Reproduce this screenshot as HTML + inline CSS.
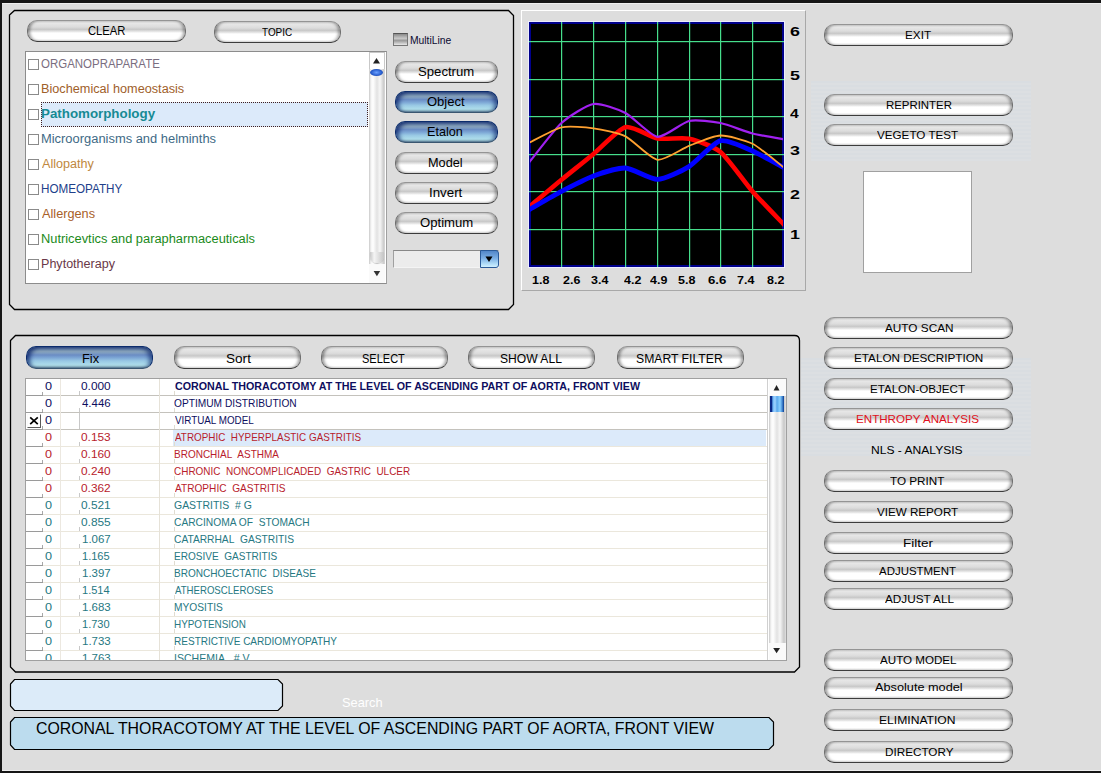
<!DOCTYPE html>
<html><head><meta charset="utf-8">
<style>
html,body{margin:0;padding:0}
body{width:1101px;height:773px;overflow:hidden;background:#dddddd;position:relative;font-family:"Liberation Sans",sans-serif}
.a{position:absolute}
.t{position:absolute;line-height:20px;white-space:nowrap;transform-origin:0 0}
.btn{position:absolute;box-sizing:border-box;height:22px;border-radius:10px;border:1px solid #707070;border-top-color:#949494;border-bottom-color:#3c3c3c;
 background:linear-gradient(#dedede 0%,#e6e6e6 12%,#dcdcdc 30%,#c8c8c8 42%,#e4e4e4 52%,#ffffff 60%,#ffffff 88%,#ececec 100%);
 box-shadow:inset 3px 0 3px -1px rgba(0,0,0,.38),inset -3px 0 3px -1px rgba(0,0,0,.32)}
.blue{border-color:#0c2c6c;border-bottom-color:#3a5670;
 background:linear-gradient(#8aa6c0 0%,#8eaac0 22%,#6a8cc4 38%,#7ea8d6 52%,#98c8e4 66%,#aadaea 82%,#a0ccd8 90%,#5a7a90 100%);
 box-shadow:inset 4px 2px 4px -1px rgba(5,30,100,.75),inset -4px 2px 4px -1px rgba(5,30,100,.6)}
.cb{position:absolute;left:28px;width:11px;height:11px;box-sizing:border-box;border:1px solid #8a8a8a;background:#fff}
</style></head><body>
<div class="a" style="left:0;top:0;width:1101px;height:3px;background:#161616"></div>
<div class="a" style="left:0;top:3px;width:1101px;height:1px;background:#eeeeee"></div>
<div class="a" style="left:0;top:771px;width:1101px;height:2px;background:#161616"></div>
<div class="a" style="left:0;top:770px;width:1101px;height:1px;background:#eeeeee"></div>
<div class="a" style="left:0;top:0;width:2px;height:773px;background:#161616"></div>
<svg class="a" style="left:0;top:0" width="1101" height="773">
 <path d="M9.5 15 L14.5 10.5 L508.5 10.5 L513.5 15.5 L513.5 304.5 L508.5 309.5 L14.5 309.5 L9.5 304.5 Z" fill="none" stroke="#000" stroke-width="1.3"/>
 <path d="M10.5 340.5 L15.5 335.5 L794.5 335.5 Q799.5 335.5 799.5 340.5 L799.5 667 L794.5 672 L15.5 672 L10.5 667 Z" fill="none" stroke="#000" stroke-width="1.3"/>
</svg>
<div class="btn" style="left:27px;top:20px;width:159px"></div>
<div class="t" id="t0" style="left:87.96px;top:20.90px;font-size:12.4px;color:#000;transform:scaleX(0.9065)">CLEAR</div>
<div class="btn" style="left:214px;top:21px;width:127px"></div>
<div class="t" id="t1" style="left:262.40px;top:21.90px;font-size:10.7px;color:#000;transform:scaleX(0.9295)">TOPIC</div>
<div class="a" style="left:393px;top:33px;width:15px;height:13px;box-sizing:border-box;border:1px solid #777;border-top-color:#555;background:linear-gradient(#8a8a8a,#c8c8c8 40%,#9a9a9a 60%,#e8e8e8)"></div>
<div class="t" id="t2" style="left:410.16px;top:29.75px;font-size:10.8px;color:#0a0a30;transform:scaleX(0.9545)">MultiLine</div>
<div class="a" style="left:25px;top:51px;width:362px;height:233px;box-sizing:border-box;border:1px solid #8c8c8c;border-right-color:#a0a0a0;background:#fff"></div>
<div class="a" style="left:369px;top:52px;width:16px;height:231px;background:linear-gradient(90deg,#c8c8c8 0,#f4f4f4 2px,#fff 4px,#e2e2e2 8px,#f6f6f6 11px,#c8c8c8 15px,#e0e0e0 16px)"></div>
<div class="a" style="left:369px;top:52px;width:16px;height:17px;background:#fff;border:1px solid #c8c8c8;border-bottom:0;box-sizing:border-box"></div>
<svg class="a" style="left:369px;top:53px" width="16" height="16"><path d="M4 10.5 L7.5 5 L11 10.5 Z" fill="#222"/></svg>
<div class="a" style="left:370px;top:69px;width:13px;height:7px;border-radius:50%;background:radial-gradient(ellipse at center,#6aa0ff 0%,#2a60d0 55%,#12308a 100%)"></div>
<div class="a" style="left:369px;top:264px;width:16px;height:19px;background:#fafafa"></div>
<div class="a" style="left:370px;top:252px;width:14px;height:11px;border-radius:0 0 7px 7px;background:linear-gradient(90deg,#c8c8c8,#f4f4f4 30%,#e0e0e0 60%,#c4c4c4);box-shadow:0 1px 1px rgba(0,0,0,.15)"></div>
<svg class="a" style="left:369px;top:264px" width="16" height="16"><path d="M4.6 7 L11.2 7 L7.9 12.3 Z" fill="#333"/></svg>
<div class="a" style="left:41px;top:102px;width:327px;height:25px;box-sizing:border-box;border:1px dotted #402020;background:#dceafa"></div>
<div class="cb" style="top:59px"></div>
<div class="t" id="t3" style="left:41.19px;top:54.00px;font-size:12px;color:#7a6e80;transform:scaleX(0.9564)">ORGANOPRAPARATE</div>
<div class="cb" style="top:84px"></div>
<div class="t" id="t4" style="left:41.18px;top:79.00px;font-size:12px;color:#a0602a;transform:scaleX(1.0578)">Biochemical homeostasis</div>
<div class="cb" style="top:109px"></div>
<div class="t" id="t5" style="left:41.19px;top:104.00px;font-size:12px;font-weight:bold;color:#168a94;transform:scaleX(1.1109)">Pathomorphology</div>
<div class="cb" style="top:134px"></div>
<div class="t" id="t6" style="left:41.19px;top:129.00px;font-size:12px;color:#3e6a86;transform:scaleX(1.0755)">Microorganisms and helminths</div>
<div class="cb" style="top:159px"></div>
<div class="t" id="t7" style="left:42.20px;top:154.00px;font-size:12px;color:#c08840;transform:scaleX(1.0494)">Allopathy</div>
<div class="cb" style="top:184px"></div>
<div class="t" id="t8" style="left:41.18px;top:179.00px;font-size:12px;color:#20408a;transform:scaleX(0.9722)">HOMEOPATHY</div>
<div class="cb" style="top:209px"></div>
<div class="t" id="t9" style="left:42.21px;top:204.00px;font-size:12px;color:#a86028;transform:scaleX(1.0596)">Allergens</div>
<div class="cb" style="top:234px"></div>
<div class="t" id="t10" style="left:41.19px;top:229.00px;font-size:12px;color:#1a8a1a;transform:scaleX(1.0696)">Nutricevtics and parapharmaceuticals</div>
<div class="cb" style="top:259px"></div>
<div class="t" id="t11" style="left:41.18px;top:254.00px;font-size:12px;color:#6a3848;transform:scaleX(1.0467)">Phytotherapy</div>
<div class="btn" style="left:395px;top:61px;width:103px"></div>
<div class="t" id="t12" style="left:417.58px;top:62.00px;font-size:12.2px;color:#000;transform:scaleX(1.0784)">Spectrum</div>
<div class="btn blue" style="left:395px;top:91px;width:103px"></div>
<div class="t" id="t13" style="left:426.58px;top:92.00px;font-size:12.2px;color:#000;transform:scaleX(1.0680)">Object</div>
<div class="btn blue" style="left:395px;top:121px;width:103px"></div>
<div class="t" id="t14" style="left:426.76px;top:122.00px;font-size:12.2px;color:#000;transform:scaleX(1.0373)">Etalon</div>
<div class="btn" style="left:395px;top:152px;width:103px"></div>
<div class="t" id="t15" style="left:428.36px;top:152.90px;font-size:12.2px;color:#000;transform:scaleX(1.0421)">Model</div>
<div class="btn" style="left:395px;top:182px;width:103px"></div>
<div class="t" id="t16" style="left:429.09px;top:183.00px;font-size:12.2px;color:#000;transform:scaleX(1.0912)">Invert</div>
<div class="btn" style="left:395px;top:212px;width:103px"></div>
<div class="t" id="t17" style="left:419.94px;top:212.70px;font-size:12.2px;color:#000;transform:scaleX(1.0771)">Optimum</div>
<div class="a" style="left:393px;top:250px;width:106px;height:18px;box-sizing:border-box;border:1px solid #f4f4f4;border-top-color:#888;border-left-color:#a0a0a0;background:#ececec"></div>
<div class="a" style="left:480px;top:250px;width:19px;height:18px;box-sizing:border-box;border:1px solid #2a5a98;border-radius:0 3px 3px 0;background:linear-gradient(#5286c8,#7aaee4 45%,#b0dcf8 80%,#d0f0ff)"></div>
<svg class="a" style="left:480px;top:250px" width="19" height="18"><path d="M5.5 6.5 L12.5 6.5 L9 12 Z" fill="#000"/></svg>
<div class="a" style="left:521px;top:10px;width:285px;height:281px;box-sizing:border-box;border:1px solid #fff;border-right-color:#a8a8a8;border-bottom-color:#a8a8a8"></div>
<svg class="a" style="left:0;top:0" width="1101" height="300">
<defs><clipPath id="pc"><rect x="530" y="23" width="253" height="243"/></clipPath></defs>
<rect x="529" y="22" width="255" height="245" fill="#000"/>
<rect x="528.5" y="21.5" width="256" height="246" fill="none" stroke="#ececff" stroke-width="1"/>
<rect x="530" y="23" width="253" height="243" fill="none" stroke="#00008c" stroke-width="2"/>
<g fill="#46de8c"><rect x="561" y="22" width="1.2" height="245"/><rect x="593" y="22" width="1.2" height="245"/><rect x="625" y="22" width="1.2" height="245"/><rect x="657" y="22" width="1.2" height="245"/><rect x="689" y="22" width="1.2" height="245"/><rect x="720" y="22" width="1.2" height="245"/><rect x="752" y="22" width="1.2" height="245"/><rect x="529" y="41" width="255" height="1.2"/><rect x="529" y="79" width="255" height="1.2"/><rect x="529" y="116" width="255" height="1.2"/><rect x="529" y="154" width="255" height="1.2"/><rect x="529" y="191" width="255" height="1.2"/><rect x="529" y="229" width="255" height="1.2"/></g>
<g clip-path="url(#pc)" fill="none" stroke-linejoin="round" stroke-linecap="round">
<path d="M529.0 207.0 C532.6 204.0 554.4 185.5 561.5 179.7 C568.6 173.9 586.5 159.7 593.5 153.9 C600.5 148.1 618.5 128.9 625.5 127.2 C632.5 125.5 650.5 137.2 657.5 138.5 C664.5 139.8 682.1 137.2 689.0 138.7 C695.9 140.2 713.5 146.2 720.5 152.0 C727.5 157.8 745.5 183.4 752.5 191.4 C759.5 199.4 780.5 220.9 784.0 224.6" stroke="#ff0000" stroke-width="4.6"/>
<path d="M529.0 209.7 C532.6 207.7 554.4 195.1 561.5 191.4 C568.6 187.7 586.5 178.6 593.5 176.0 C600.5 173.4 618.5 167.6 625.5 168.0 C632.5 168.4 650.5 179.6 657.5 179.4 C664.5 179.2 682.1 170.9 689.0 166.6 C695.9 162.3 713.5 142.4 720.5 140.7 C727.5 139.0 745.5 148.0 752.5 151.0 C759.5 154.0 780.5 165.8 784.0 167.6" stroke="#0000ff" stroke-width="4.8"/>
<path d="M529.0 162.5 C532.6 158.2 554.4 129.4 561.5 123.0 C568.6 116.6 586.5 105.1 593.5 104.0 C600.5 102.9 618.5 109.4 625.5 113.0 C632.5 116.6 650.5 135.9 657.5 136.8 C664.5 137.7 682.1 122.5 689.0 121.0 C695.9 119.5 713.5 121.6 720.5 123.0 C727.5 124.4 745.5 131.7 752.5 133.5 C759.5 135.3 780.5 138.7 784.0 139.3" stroke="#a020f0" stroke-width="2.2"/>
<path d="M529.0 142.8 C532.6 141.1 554.4 128.9 561.5 127.3 C568.6 125.7 586.5 127.3 593.5 128.3 C600.5 129.3 618.5 132.9 625.5 136.4 C632.5 139.9 650.5 158.8 657.5 159.8 C664.5 160.8 682.1 148.6 689.0 145.9 C695.9 143.2 713.5 135.7 720.5 135.5 C727.5 135.3 745.5 140.3 752.5 143.8 C759.5 147.3 780.5 165.0 784.0 167.6" stroke="#ffa030" stroke-width="1.8"/>
</g></svg>
<div class="t" id="t18" style="left:789.63px;top:21.80px;font-size:12.4px;font-weight:bold;color:#000;transform:scaleX(1.4417)">6</div>
<div class="t" id="t19" style="left:789.63px;top:65.70px;font-size:12.4px;font-weight:bold;color:#000;transform:scaleX(1.4417)">5</div>
<div class="t" id="t20" style="left:789.81px;top:104.40px;font-size:12.4px;font-weight:bold;color:#000;transform:scaleX(1.2615)">4</div>
<div class="t" id="t21" style="left:789.63px;top:141.30px;font-size:12.4px;font-weight:bold;color:#000;transform:scaleX(1.4417)">3</div>
<div class="t" id="t22" style="left:789.63px;top:185.40px;font-size:12.4px;font-weight:bold;color:#000;transform:scaleX(1.4417)">2</div>
<div class="t" id="t23" style="left:789.63px;top:225.10px;font-size:12.4px;font-weight:bold;color:#000;transform:scaleX(1.4417)">1</div>
<div class="t" id="t24" style="left:532.30px;top:269.90px;font-size:10.6px;font-weight:bold;color:#000;transform:scaleX(1.1807)">1.8</div>
<div class="t" id="t25" style="left:563.00px;top:269.90px;font-size:10.6px;font-weight:bold;color:#000;transform:scaleX(1.1761)">2.6</div>
<div class="t" id="t26" style="left:590.95px;top:269.90px;font-size:10.6px;font-weight:bold;color:#000;transform:scaleX(1.1761)">3.4</div>
<div class="t" id="t27" style="left:623.59px;top:269.90px;font-size:10.6px;font-weight:bold;color:#000;transform:scaleX(1.1761)">4.2</div>
<div class="t" id="t28" style="left:649.78px;top:269.90px;font-size:10.6px;font-weight:bold;color:#000;transform:scaleX(1.1761)">4.9</div>
<div class="t" id="t29" style="left:678.19px;top:269.90px;font-size:10.6px;font-weight:bold;color:#000;transform:scaleX(1.1807)">5.8</div>
<div class="t" id="t30" style="left:707.92px;top:269.90px;font-size:10.6px;font-weight:bold;color:#000;transform:scaleX(1.2496)">6.6</div>
<div class="t" id="t31" style="left:737.15px;top:269.90px;font-size:10.6px;font-weight:bold;color:#000;transform:scaleX(1.1761)">7.4</div>
<div class="t" id="t32" style="left:766.78px;top:269.90px;font-size:10.6px;font-weight:bold;color:#000;transform:scaleX(1.1761)">8.2</div>
<div class="a" style="left:811px;top:81px;width:220px;height:80px;background:repeating-linear-gradient(#d9dde1 0,#d9dde1 2px,#dcdfe2 2px,#dcdfe2 4px)"></div>
<div class="a" style="left:801px;top:358px;width:230px;height:98px;background:repeating-linear-gradient(#d9dde1 0,#d9dde1 2px,#dcdfe2 2px,#dcdfe2 4px)"></div>
<div class="a" style="left:863px;top:171px;width:109px;height:102px;box-sizing:border-box;border:1px solid #a0a0a0;background:#fff"></div>
<div class="btn" style="left:824px;top:24px;width:189px"></div>
<div class="t" id="t33" style="left:904.72px;top:24.80px;font-size:11.8px;color:#000;transform:scaleX(0.9953)">EXIT</div>
<div class="btn" style="left:824px;top:94px;width:189px"></div>
<div class="t" id="t34" style="left:885.97px;top:94.60px;font-size:11.8px;color:#000;transform:scaleX(0.9671)">REPRINTER</div>
<div class="btn" style="left:824px;top:124px;width:189px"></div>
<div class="t" id="t35" style="left:877.00px;top:125.00px;font-size:11.8px;color:#000;transform:scaleX(0.9883)">VEGETO TEST</div>
<div class="btn" style="left:824px;top:317px;width:189px"></div>
<div class="t" id="t36" style="left:885.20px;top:317.80px;font-size:11.8px;color:#000;transform:scaleX(0.9988)">AUTO SCAN</div>
<div class="btn" style="left:824px;top:347px;width:189px"></div>
<div class="t" id="t37" style="left:853.79px;top:348.10px;font-size:11.8px;color:#000;transform:scaleX(0.9932)">ETALON DESCRIPTION</div>
<div class="btn" style="left:824px;top:378px;width:189px"></div>
<div class="t" id="t38" style="left:870.39px;top:378.50px;font-size:11.8px;color:#000;transform:scaleX(0.9817)">ETALON-OBJECT</div>
<div class="btn" style="left:824px;top:408px;width:189px"></div>
<div class="t" id="t39" style="left:856.37px;top:408.60px;font-size:11.8px;color:#e01020;transform:scaleX(0.9847)">ENTHROPY ANALYSIS</div>
<div class="btn" style="left:824px;top:470px;width:189px"></div>
<div class="t" id="t40" style="left:890.40px;top:470.90px;font-size:11.8px;color:#000;transform:scaleX(0.9922)">TO PRINT</div>
<div class="btn" style="left:824px;top:501px;width:189px"></div>
<div class="t" id="t41" style="left:877.40px;top:501.90px;font-size:11.8px;color:#000;transform:scaleX(0.9859)">VIEW REPORT</div>
<div class="btn" style="left:824px;top:531.5px;width:189px"></div>
<div class="t" id="t42" style="left:902.74px;top:532.80px;font-size:11.8px;color:#000;transform:scaleX(1.1448)">Filter</div>
<div class="btn" style="left:824px;top:560px;width:189px"></div>
<div class="t" id="t43" style="left:879.00px;top:560.90px;font-size:11.8px;color:#000;transform:scaleX(0.9710)">ADJUSTMENT</div>
<div class="btn" style="left:824px;top:588px;width:189px"></div>
<div class="t" id="t44" style="left:884.61px;top:588.70px;font-size:11.8px;color:#000;transform:scaleX(0.9951)">ADJUST ALL</div>
<div class="btn" style="left:824px;top:649px;width:189px"></div>
<div class="t" id="t45" style="left:880.20px;top:649.50px;font-size:11.8px;color:#000;transform:scaleX(0.9844)">AUTO MODEL</div>
<div class="btn" style="left:824px;top:677px;width:189px"></div>
<div class="t" id="t46" style="left:874.60px;top:677.30px;font-size:11.8px;color:#000;transform:scaleX(1.0781)">Absolute model</div>
<div class="btn" style="left:824px;top:708.5px;width:189px"></div>
<div class="t" id="t47" style="left:879.38px;top:709.60px;font-size:11.8px;color:#000;transform:scaleX(1.0274)">ELIMINATION</div>
<div class="btn" style="left:824px;top:740.5px;width:189px"></div>
<div class="t" id="t48" style="left:884.57px;top:741.70px;font-size:11.8px;color:#000;transform:scaleX(0.9924)">DIRECTORY</div>
<div class="t" id="t49" style="left:871.37px;top:439.70px;font-size:11.5px;color:#000;transform:scaleX(1.0492)">NLS - ANALYSIS</div>
<div class="btn blue" style="left:26px;top:346px;width:127px;height:23px"></div>
<div class="t" id="t50" style="left:81.93px;top:348.80px;font-size:12.3px;color:#000;transform:scaleX(1.0390)">Fix</div>
<div class="btn" style="left:174px;top:346px;width:127px;height:23px"></div>
<div class="t" id="t51" style="left:225.89px;top:348.80px;font-size:12.3px;color:#000;transform:scaleX(1.1041)">Sort</div>
<div class="btn" style="left:321px;top:346px;width:127px;height:23px"></div>
<div class="t" id="t52" style="left:361.56px;top:348.80px;font-size:12.3px;color:#000;transform:scaleX(0.8953)">SELECT</div>
<div class="btn" style="left:468px;top:346px;width:127px;height:23px"></div>
<div class="t" id="t53" style="left:500.18px;top:348.80px;font-size:12.3px;color:#000;transform:scaleX(0.9841)">SHOW ALL</div>
<div class="btn" style="left:617px;top:346px;width:127px;height:23px"></div>
<div class="t" id="t54" style="left:636.37px;top:348.80px;font-size:12.3px;color:#000;transform:scaleX(0.9914)">SMART FILTER</div>
<div class="a" style="left:25px;top:378px;width:762px;height:283px;box-sizing:border-box;border:1px solid #a0a0a0;background:#fff;overflow:hidden">
<div class="a" style="left:0;top:16px;width:741px;height:1px;background:#c4c2bc"></div>
<div class="a" style="left:0;top:16px;width:17px;height:1px;background:#9a9a9a"></div>
<div class="a" style="left:16px;top:13px;width:1px;height:3px;background:#a8a8a8"></div>
<div class="a" style="left:53px;top:12px;width:1px;height:4px;background:#c8c8c8"></div>
<div class="a" style="left:148px;top:12px;width:1px;height:4px;background:#e0dcd0"></div>
<div class="t" id="t55" style="left:18.77px;top:-2.20px;font-size:10.4px;color:#0e0e5e;transform:scaleX(1.2186)">0</div>
<div class="t" id="t56" style="left:55.28px;top:-2.20px;font-size:10.4px;color:#0e0e5e;transform:scaleX(1.1422)">0.000</div>
<div class="t" id="t57" style="left:148.60px;top:-2.20px;font-size:10.4px;font-weight:bold;color:#0e0e5e;transform:scaleX(1.0280)">CORONAL THORACOTOMY AT THE LEVEL OF ASCENDING PART OF AORTA, FRONT VIEW</div>
<div class="a" style="left:0;top:33px;width:741px;height:1px;background:#c4c2bc"></div>
<div class="a" style="left:0;top:33px;width:17px;height:1px;background:#9a9a9a"></div>
<div class="a" style="left:16px;top:30px;width:1px;height:3px;background:#a8a8a8"></div>
<div class="a" style="left:53px;top:29px;width:1px;height:4px;background:#c8c8c8"></div>
<div class="a" style="left:148px;top:29px;width:1px;height:4px;background:#e0dcd0"></div>
<div class="t" id="t58" style="left:18.77px;top:14.80px;font-size:10.4px;color:#0e0e5e;transform:scaleX(1.2186)">0</div>
<div class="t" id="t59" style="left:56.38px;top:14.80px;font-size:10.4px;color:#0e0e5e;transform:scaleX(1.0999)">4.446</div>
<div class="t" id="t60" style="left:147.59px;top:14.80px;font-size:10.4px;color:#0e0e5e;transform:scaleX(0.9796)">OPTIMUM DISTRIBUTION</div>
<div class="a" style="left:0;top:50px;width:741px;height:1px;background:#c4c2bc"></div>
<div class="a" style="left:0;top:50px;width:17px;height:1px;background:#9a9a9a"></div>
<div class="a" style="left:16px;top:47px;width:1px;height:3px;background:#a8a8a8"></div>
<div class="a" style="left:53px;top:34px;width:1px;height:16px;background:#c8c8c8"></div>
<div class="a" style="left:148px;top:46px;width:1px;height:4px;background:#e0dcd0"></div>
<div class="t" id="t61" style="left:18.77px;top:31.80px;font-size:10.4px;color:#0e0e5e;transform:scaleX(1.2186)">0</div>
<div class="t" id="t62" style="left:148.60px;top:31.80px;font-size:10.4px;color:#0e0e5e;transform:scaleX(0.9459)">VIRTUAL MODEL</div>
<div class="a" style="left:147px;top:51px;width:593px;height:16px;background:#dceafa"></div>
<div class="a" style="left:0;top:67px;width:741px;height:1px;background:#ebe7dc"></div>
<div class="a" style="left:0;top:67px;width:17px;height:1px;background:#9a9a9a"></div>
<div class="a" style="left:16px;top:64px;width:1px;height:3px;background:#a8a8a8"></div>
<div class="a" style="left:53px;top:63px;width:1px;height:4px;background:#c8c8c8"></div>
<div class="a" style="left:148px;top:63px;width:1px;height:4px;background:#e0dcd0"></div>
<div class="t" id="t63" style="left:18.77px;top:48.80px;font-size:10.4px;color:#b81c2c;transform:scaleX(1.2186)">0</div>
<div class="t" id="t64" style="left:55.28px;top:48.80px;font-size:10.4px;color:#b81c2c;transform:scaleX(1.1422)">0.153</div>
<div class="t" id="t65" style="left:148.60px;top:48.80px;font-size:10.4px;color:#b81c2c;transform:scaleX(0.9520)">ATROPHIC  HYPERPLASTIC GASTRITIS</div>
<div class="a" style="left:0;top:84px;width:741px;height:1px;background:#ebe7dc"></div>
<div class="a" style="left:0;top:84px;width:17px;height:1px;background:#9a9a9a"></div>
<div class="a" style="left:16px;top:81px;width:1px;height:3px;background:#a8a8a8"></div>
<div class="a" style="left:53px;top:80px;width:1px;height:4px;background:#c8c8c8"></div>
<div class="a" style="left:148px;top:80px;width:1px;height:4px;background:#e0dcd0"></div>
<div class="t" id="t66" style="left:18.77px;top:65.80px;font-size:10.4px;color:#b81c2c;transform:scaleX(1.2186)">0</div>
<div class="t" id="t67" style="left:55.28px;top:65.80px;font-size:10.4px;color:#b81c2c;transform:scaleX(1.1422)">0.160</div>
<div class="t" id="t68" style="left:147.58px;top:65.80px;font-size:10.4px;color:#b81c2c;transform:scaleX(0.9623)">BRONCHIAL  ASTHMA</div>
<div class="a" style="left:0;top:101px;width:741px;height:1px;background:#ebe7dc"></div>
<div class="a" style="left:0;top:101px;width:17px;height:1px;background:#9a9a9a"></div>
<div class="a" style="left:16px;top:98px;width:1px;height:3px;background:#a8a8a8"></div>
<div class="a" style="left:53px;top:97px;width:1px;height:4px;background:#c8c8c8"></div>
<div class="a" style="left:148px;top:97px;width:1px;height:4px;background:#e0dcd0"></div>
<div class="t" id="t69" style="left:18.77px;top:82.80px;font-size:10.4px;color:#b81c2c;transform:scaleX(1.2186)">0</div>
<div class="t" id="t70" style="left:55.28px;top:82.80px;font-size:10.4px;color:#b81c2c;transform:scaleX(1.1422)">0.240</div>
<div class="t" id="t71" style="left:147.59px;top:82.80px;font-size:10.4px;color:#b81c2c;transform:scaleX(0.9580)">CHRONIC  NONCOMPLICADED  GASTRIC  ULCER</div>
<div class="a" style="left:0;top:118px;width:741px;height:1px;background:#ebe7dc"></div>
<div class="a" style="left:0;top:118px;width:17px;height:1px;background:#9a9a9a"></div>
<div class="a" style="left:16px;top:115px;width:1px;height:3px;background:#a8a8a8"></div>
<div class="a" style="left:53px;top:114px;width:1px;height:4px;background:#c8c8c8"></div>
<div class="a" style="left:148px;top:114px;width:1px;height:4px;background:#e0dcd0"></div>
<div class="t" id="t72" style="left:18.77px;top:99.80px;font-size:10.4px;color:#b81c2c;transform:scaleX(1.2186)">0</div>
<div class="t" id="t73" style="left:55.28px;top:99.80px;font-size:10.4px;color:#b81c2c;transform:scaleX(1.1422)">0.362</div>
<div class="t" id="t74" style="left:148.60px;top:99.80px;font-size:10.4px;color:#b81c2c;transform:scaleX(0.9736)">ATROPHIC  GASTRITIS</div>
<div class="a" style="left:0;top:135px;width:741px;height:1px;background:#ebe7dc"></div>
<div class="a" style="left:0;top:135px;width:17px;height:1px;background:#9a9a9a"></div>
<div class="a" style="left:16px;top:132px;width:1px;height:3px;background:#a8a8a8"></div>
<div class="a" style="left:53px;top:131px;width:1px;height:4px;background:#c8c8c8"></div>
<div class="a" style="left:148px;top:131px;width:1px;height:4px;background:#e0dcd0"></div>
<div class="t" id="t75" style="left:18.77px;top:116.80px;font-size:10.4px;color:#267882;transform:scaleX(1.2186)">0</div>
<div class="t" id="t76" style="left:55.28px;top:116.80px;font-size:10.4px;color:#267882;transform:scaleX(1.1422)">0.521</div>
<div class="t" id="t77" style="left:147.58px;top:116.80px;font-size:10.4px;color:#267882;transform:scaleX(1.0070)">GASTRITIS  # G</div>
<div class="a" style="left:0;top:152px;width:741px;height:1px;background:#ebe7dc"></div>
<div class="a" style="left:0;top:152px;width:17px;height:1px;background:#9a9a9a"></div>
<div class="a" style="left:16px;top:149px;width:1px;height:3px;background:#a8a8a8"></div>
<div class="a" style="left:53px;top:148px;width:1px;height:4px;background:#c8c8c8"></div>
<div class="a" style="left:148px;top:148px;width:1px;height:4px;background:#e0dcd0"></div>
<div class="t" id="t78" style="left:18.77px;top:133.80px;font-size:10.4px;color:#267882;transform:scaleX(1.2186)">0</div>
<div class="t" id="t79" style="left:55.28px;top:133.80px;font-size:10.4px;color:#267882;transform:scaleX(1.1422)">0.855</div>
<div class="t" id="t80" style="left:147.58px;top:133.80px;font-size:10.4px;color:#267882;transform:scaleX(0.9839)">CARCINOMA OF  STOMACH</div>
<div class="a" style="left:0;top:169px;width:741px;height:1px;background:#ebe7dc"></div>
<div class="a" style="left:0;top:169px;width:17px;height:1px;background:#9a9a9a"></div>
<div class="a" style="left:16px;top:166px;width:1px;height:3px;background:#a8a8a8"></div>
<div class="a" style="left:53px;top:165px;width:1px;height:4px;background:#c8c8c8"></div>
<div class="a" style="left:148px;top:165px;width:1px;height:4px;background:#e0dcd0"></div>
<div class="t" id="t81" style="left:18.77px;top:150.80px;font-size:10.4px;color:#267882;transform:scaleX(1.2186)">0</div>
<div class="t" id="t82" style="left:56.28px;top:150.80px;font-size:10.4px;color:#267882;transform:scaleX(1.1043)">1.067</div>
<div class="t" id="t83" style="left:147.59px;top:150.80px;font-size:10.4px;color:#267882;transform:scaleX(0.9832)">CATARRHAL  GASTRITIS</div>
<div class="a" style="left:0;top:186px;width:741px;height:1px;background:#ebe7dc"></div>
<div class="a" style="left:0;top:186px;width:17px;height:1px;background:#9a9a9a"></div>
<div class="a" style="left:16px;top:183px;width:1px;height:3px;background:#a8a8a8"></div>
<div class="a" style="left:53px;top:182px;width:1px;height:4px;background:#c8c8c8"></div>
<div class="a" style="left:148px;top:182px;width:1px;height:4px;background:#e0dcd0"></div>
<div class="t" id="t84" style="left:18.77px;top:167.80px;font-size:10.4px;color:#267882;transform:scaleX(1.2186)">0</div>
<div class="t" id="t85" style="left:56.33px;top:167.80px;font-size:10.4px;color:#267882;transform:scaleX(1.0634)">1.165</div>
<div class="t" id="t86" style="left:147.58px;top:167.80px;font-size:10.4px;color:#267882;transform:scaleX(0.9658)">EROSIVE  GASTRITIS</div>
<div class="a" style="left:0;top:203px;width:741px;height:1px;background:#ebe7dc"></div>
<div class="a" style="left:0;top:203px;width:17px;height:1px;background:#9a9a9a"></div>
<div class="a" style="left:16px;top:200px;width:1px;height:3px;background:#a8a8a8"></div>
<div class="a" style="left:53px;top:199px;width:1px;height:4px;background:#c8c8c8"></div>
<div class="a" style="left:148px;top:199px;width:1px;height:4px;background:#e0dcd0"></div>
<div class="t" id="t87" style="left:18.77px;top:184.80px;font-size:10.4px;color:#267882;transform:scaleX(1.2186)">0</div>
<div class="t" id="t88" style="left:56.28px;top:184.80px;font-size:10.4px;color:#267882;transform:scaleX(1.1043)">1.397</div>
<div class="t" id="t89" style="left:147.59px;top:184.80px;font-size:10.4px;color:#267882;transform:scaleX(0.9668)">BRONCHOECTATIC  DISEASE</div>
<div class="a" style="left:0;top:220px;width:741px;height:1px;background:#ebe7dc"></div>
<div class="a" style="left:0;top:220px;width:17px;height:1px;background:#9a9a9a"></div>
<div class="a" style="left:16px;top:217px;width:1px;height:3px;background:#a8a8a8"></div>
<div class="a" style="left:53px;top:216px;width:1px;height:4px;background:#c8c8c8"></div>
<div class="a" style="left:148px;top:216px;width:1px;height:4px;background:#e0dcd0"></div>
<div class="t" id="t90" style="left:18.77px;top:201.80px;font-size:10.4px;color:#267882;transform:scaleX(1.2186)">0</div>
<div class="t" id="t91" style="left:56.33px;top:201.80px;font-size:10.4px;color:#267882;transform:scaleX(1.0634)">1.514</div>
<div class="t" id="t92" style="left:148.60px;top:201.80px;font-size:10.4px;color:#267882;transform:scaleX(0.9255)">ATHEROSCLEROSES</div>
<div class="a" style="left:0;top:237px;width:741px;height:1px;background:#ebe7dc"></div>
<div class="a" style="left:0;top:237px;width:17px;height:1px;background:#9a9a9a"></div>
<div class="a" style="left:16px;top:234px;width:1px;height:3px;background:#a8a8a8"></div>
<div class="a" style="left:53px;top:233px;width:1px;height:4px;background:#c8c8c8"></div>
<div class="a" style="left:148px;top:233px;width:1px;height:4px;background:#e0dcd0"></div>
<div class="t" id="t93" style="left:18.77px;top:218.80px;font-size:10.4px;color:#267882;transform:scaleX(1.2186)">0</div>
<div class="t" id="t94" style="left:56.28px;top:218.80px;font-size:10.4px;color:#267882;transform:scaleX(1.1043)">1.683</div>
<div class="t" id="t95" style="left:147.56px;top:218.80px;font-size:10.4px;color:#267882;transform:scaleX(0.9824)">MYOSITIS</div>
<div class="a" style="left:0;top:254px;width:741px;height:1px;background:#ebe7dc"></div>
<div class="a" style="left:0;top:254px;width:17px;height:1px;background:#9a9a9a"></div>
<div class="a" style="left:16px;top:251px;width:1px;height:3px;background:#a8a8a8"></div>
<div class="a" style="left:53px;top:250px;width:1px;height:4px;background:#c8c8c8"></div>
<div class="a" style="left:148px;top:250px;width:1px;height:4px;background:#e0dcd0"></div>
<div class="t" id="t96" style="left:18.77px;top:235.80px;font-size:10.4px;color:#267882;transform:scaleX(1.2186)">0</div>
<div class="t" id="t97" style="left:56.33px;top:235.80px;font-size:10.4px;color:#267882;transform:scaleX(1.0634)">1.730</div>
<div class="t" id="t98" style="left:147.59px;top:235.80px;font-size:10.4px;color:#267882;transform:scaleX(0.9507)">HYPOTENSION</div>
<div class="a" style="left:0;top:271px;width:741px;height:1px;background:#ebe7dc"></div>
<div class="a" style="left:0;top:271px;width:17px;height:1px;background:#9a9a9a"></div>
<div class="a" style="left:16px;top:268px;width:1px;height:3px;background:#a8a8a8"></div>
<div class="a" style="left:53px;top:267px;width:1px;height:4px;background:#c8c8c8"></div>
<div class="a" style="left:148px;top:267px;width:1px;height:4px;background:#e0dcd0"></div>
<div class="t" id="t99" style="left:18.77px;top:252.80px;font-size:10.4px;color:#267882;transform:scaleX(1.2186)">0</div>
<div class="t" id="t100" style="left:56.28px;top:252.80px;font-size:10.4px;color:#267882;transform:scaleX(1.1043)">1.733</div>
<div class="t" id="t101" style="left:147.59px;top:252.80px;font-size:10.4px;color:#267882;transform:scaleX(0.9656)">RESTRICTIVE CARDIOMYOPATHY</div>
<div class="a" style="left:0;top:288px;width:741px;height:1px;background:#ebe7dc"></div>
<div class="a" style="left:0;top:288px;width:17px;height:1px;background:#9a9a9a"></div>
<div class="a" style="left:16px;top:285px;width:1px;height:3px;background:#a8a8a8"></div>
<div class="a" style="left:53px;top:284px;width:1px;height:4px;background:#c8c8c8"></div>
<div class="a" style="left:148px;top:284px;width:1px;height:4px;background:#e0dcd0"></div>
<div class="t" id="t102" style="left:18.77px;top:269.80px;font-size:10.4px;color:#267882;transform:scaleX(1.2186)">0</div>
<div class="t" id="t103" style="left:56.28px;top:269.80px;font-size:10.4px;color:#267882;transform:scaleX(1.1043)">1.763</div>
<div class="t" id="t104" style="left:147.58px;top:269.80px;font-size:10.4px;color:#267882;transform:scaleX(1.0144)">ISCHEMIA   # V</div>
<div class="a" style="left:34px;top:0;width:1px;height:290px;background:#ece8e0"></div>
<div class="a" style="left:133px;top:0;width:1px;height:290px;background:#e6e2d8"></div>
<div class="a" style="left:741px;top:0;width:1px;height:290px;background:#d0d0d0"></div>
<div class="a" style="left:1px;top:35px;width:14px;height:14px;box-sizing:border-box;border:1px solid #fafafa;border-right-color:#5a5a5a;border-bottom-color:#5a5a5a;background:#fff"></div>
<svg class="a" style="left:1px;top:35px" width="14" height="14"><path d="M3.2 3.3 L10.8 10.2 M10.8 3.3 L3.2 10.2" stroke="#000" stroke-width="1.7"/></svg>
<div class="a" style="left:743px;top:0;width:17px;height:281px;background:linear-gradient(90deg,#c8c8c8 0,#f4f4f4 2px,#fff 4px,#e2e2e2 8px,#f6f6f6 11px,#c8c8c8 15px,#e0e0e0 17px)"></div>
<div class="a" style="left:743px;top:0;width:17px;height:17px;background:#fafafa"></div>
<svg class="a" style="left:743px;top:0" width="17" height="17"><path d="M4.6 11.6 L7.55 6 L10.5 11.6 Z" fill="#222"/></svg>
<div class="a" style="left:744px;top:17px;width:14px;height:16px;background:linear-gradient(90deg,#0a2a8a 0,#0a2a8a 1.5px,#70b8f8 3px,#a0d4ff 5px,#5aa8ec 7px,#8ad0ff 10px,#4a90d8 12px,#0a3a90 14px)"></div>
<div class="a" style="left:743px;top:264px;width:17px;height:17px;background:#fafafa"></div>
<svg class="a" style="left:743px;top:264px" width="17" height="17"><path d="M4.2 5 L11 5 L7.6 10.3 Z" fill="#222"/></svg>
</div>
<svg class="a" style="left:0;top:0" width="800" height="773">
<path d="M10.5 684 L14.5 679.5 L278 679.5 L282.5 684 L282.5 706 L278 710.5 L14.5 710.5 L10.5 706 Z" fill="#dcebf9" stroke="#000" stroke-width="1.2"/>
<path d="M10.5 722 L14.5 717.5 L769 717.5 L773.5 722 L773.5 745 L769 749.5 L14.5 749.5 L10.5 745 Z" fill="#bcdcee" stroke="#000" stroke-width="1.2"/>
</svg>
<div class="t" id="t105" style="left:342.33px;top:693.00px;font-size:12.4px;color:#ffffff;transform:scaleX(1.0335)">Search</div>
<div class="t" id="t106" style="left:36.19px;top:717.90px;font-size:16.4px;color:#000;transform:scaleX(0.9673)">CORONAL THORACOTOMY AT THE LEVEL OF ASCENDING PART OF AORTA, FRONT VIEW</div>
</body></html>
